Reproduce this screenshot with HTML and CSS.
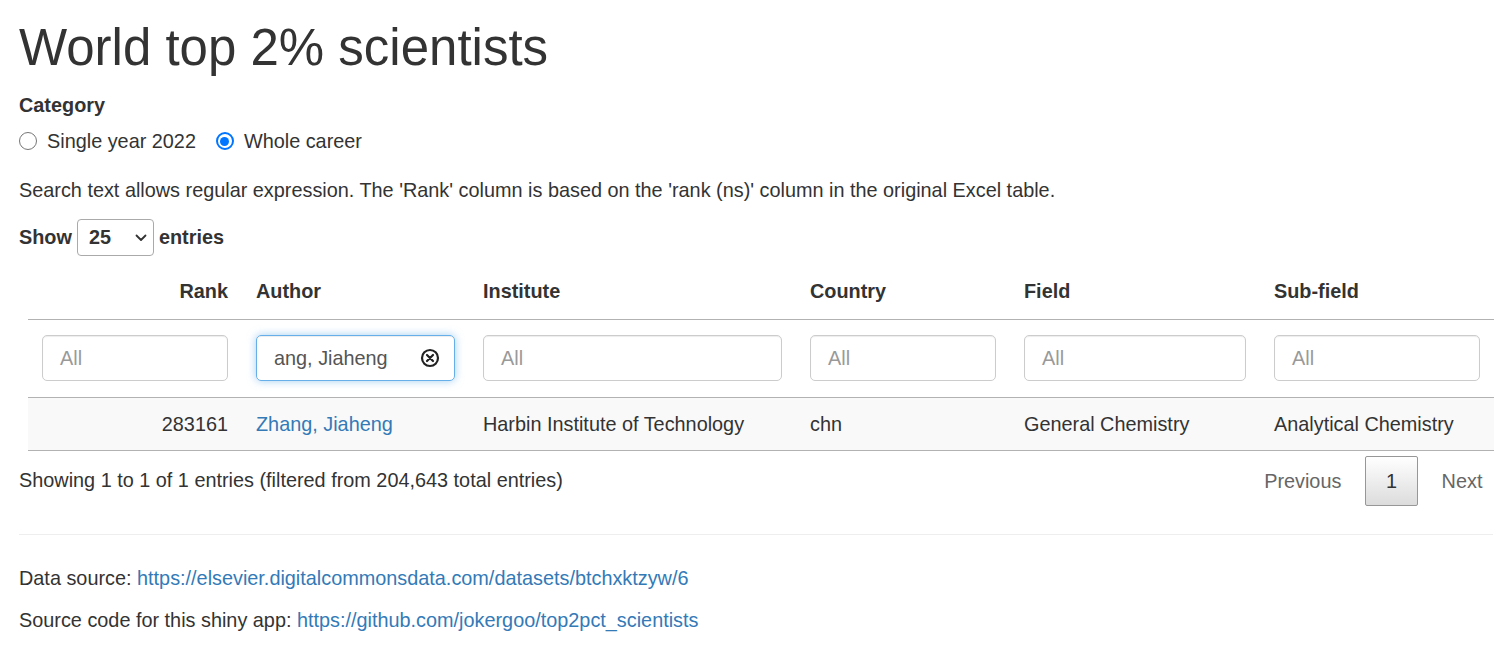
FILE: index.html
```html
<!DOCTYPE html>
<html>
<head>
<meta charset="utf-8">
<title>World top 2% scientists</title>
<link rel="stylesheet" href="styles.css">
</head>
<body>
<div class="page">
  <h1 class="title">World top 2% scientists</h1>
  <div class="form-group">
    <div class="label">Category</div>
    <div class="radios">
      <label class="radio"><span class="dot"></span>Single year 2022</label>
      <label class="radio"><span class="dot checked"></span>Whole career</label>
    </div>
  </div>
  <p class="note">Search text allows regular expression. The 'Rank' column is based on the 'rank (ns)' column in the original Excel table.</p>
  <div class="length">
    <span>Show</span>
    <span class="select-wrap">
      <select class="length-select"><option>25</option></select>
      <svg class="chev" width="12" height="8" viewBox="0 0 12 8"><path d="M1.5 1.5 L6 6 L10.5 1.5" fill="none" stroke="#333" stroke-width="1.8" stroke-linecap="round" stroke-linejoin="round"/></svg>
    </span>
    <span>entries</span>
  </div>
  <table class="dt">
    <colgroup>
      <col class="c1"><col class="c2"><col class="c3"><col class="c4"><col class="c5"><col class="c6">
    </colgroup>
    <thead>
      <tr class="head">
        <th class="num">Rank</th><th>Author</th><th>Institute</th><th>Country</th><th>Field</th><th>Sub-field</th>
      </tr>
      <tr class="filters">
        <td><div class="fbox">All</div></td>
        <td><div class="fbox focus"><span class="val">ang, Jiaheng</span>
          <svg class="clear" width="20" height="20" viewBox="0 0 20 20"><circle cx="10" cy="10" r="8" fill="none" stroke="#222" stroke-width="2.2"/><path d="M7 7 L13 13 M13 7 L7 13" stroke="#222" stroke-width="2.2" stroke-linecap="round"/></svg></div></td>
        <td><div class="fbox">All</div></td>
        <td><div class="fbox">All</div></td>
        <td><div class="fbox">All</div></td>
        <td><div class="fbox">All</div></td>
      </tr>
    </thead>
    <tbody>
      <tr class="odd">
        <td class="num">283161</td>
        <td><a href="#">Zhang, Jiaheng</a></td>
        <td>Harbin Institute of Technology</td>
        <td>chn</td>
        <td>General Chemistry</td>
        <td>Analytical Chemistry</td>
      </tr>
    </tbody>
  </table>
  <div class="footer-row">
    <div class="info">Showing 1 to 1 of 1 entries (filtered from 204,643 total entries)</div>
    <div class="paging">
      <span class="pbtn disabled">Previous</span>
      <span class="pbtn current">1</span>
      <span class="pbtn disabled">Next</span>
    </div>
  </div>
  <hr class="rule">
  <p class="src">Data source: <a href="#">https://elsevier.digitalcommonsdata.com/datasets/btchxktzyw/6</a></p>
  <p class="src">Source code for this shiny app: <a href="#">https://github.com/jokergoo/top2pct_scientists</a></p>
</div>
</body>
</html>
```
FILE: styles.css
```css
html, body {
  margin: 0;
  padding: 0;
  background: #fff;
}
body {
  font-family: "Liberation Sans", Arial, sans-serif;
  font-size: 19.85px;
  line-height: 28px;
  color: #333;
}
a {
  color: #337ab7;
  text-decoration: none;
}
.page {
  padding: 0 19px;
}
.title {
  font-size: 51px;
  font-weight: normal;
  line-height: 55px;
  margin: 20px 0 16px;
}
.form-group {
  margin-bottom: 21px;
}
.label {
  font-weight: bold;
  margin-bottom: 8px;
}
.radios {
  display: flex;
  gap: 20px;
}
.radio {
  display: flex;
  align-items: center;
  gap: 10px;
}
.dot {
  width: 16px;
  height: 16px;
  border: 1px solid #767676;
  border-radius: 50%;
  box-sizing: content-box;
  background: #fff;
  position: relative;
}
.dot.checked {
  border: 2px solid #0075ff;
  width: 14px;
  height: 14px;
}
.dot.checked::after {
  content: "";
  position: absolute;
  left: 2.5px;
  top: 2.5px;
  width: 9px;
  height: 9px;
  border-radius: 50%;
  background: #0075ff;
}
.note {
  margin: 0 0 14px;
}
.length {
  display: flex;
  align-items: center;
  gap: 5px;
  font-weight: bold;
  height: 38px;
}
.select-wrap {
  position: relative;
  display: inline-flex;
}
.length-select {
  -webkit-appearance: none;
  appearance: none;
  font-family: inherit;
  font-size: 19.85px;
  font-weight: bold;
  color: #333;
  width: 77px;
  height: 37px;
  padding: 0 6px 0 11px;
  border: 1px solid #aaa;
  border-radius: 4px;
  background: #fff;
}
.chev {
  position: absolute;
  right: 7px;
  top: 15px;
  pointer-events: none;
}
.dt {
  border-collapse: collapse;
  margin: 7px 0 0 9px;
  width: calc(100% - 9px);
  table-layout: fixed;
}
.c1 { width: 214px; }
.c2 { width: 227px; }
.c3 { width: 327px; }
.c4 { width: 214px; }
.c5 { width: 250px; }
.c6 { width: 234px; }
.dt th {
  text-align: left;
  font-weight: bold;
  padding: 14px 14px 14px;
  border-bottom: 1px solid #b2b2b2;
}
.dt .num {
  text-align: right;
}
.filters td {
  padding: 15px 14px 16px;
  border-bottom: 1px solid #b2b2b2;
}
.fbox {
  height: 44px;
  border: 1px solid #ccc;
  border-radius: 5px;
  padding: 0 17px;
  display: flex;
  align-items: center;
  color: #999;
  position: relative;
  box-shadow: inset 0 1px 1px rgba(0,0,0,0.075);
}
.fbox.focus {
  border-color: #66afe9;
  color: #555;
  box-shadow: inset 0 1px 1px rgba(0,0,0,0.075), 0 0 8px rgba(102,175,233,0.6);
}
.clear {
  position: absolute;
  right: 14px;
  top: 12px;
}
.odd td {
  background: #f9f9f9;
  padding: 12px 14px 12px;
  border-bottom: 1px solid #b2b2b2;
  white-space: nowrap;
}
.footer-row {
  display: flex;
  justify-content: space-between;
  align-items: flex-start;
  margin-right: -10px;
}
.info {
  padding-top: 15px;
}
.paging {
  display: flex;
  padding-top: 5px;
}
.pbtn {
  padding: 10px 19.6px;
  border: 1px solid transparent;
  border-radius: 2px;
  margin-left: 3px;
  line-height: 28px;
}
.pbtn.disabled {
  color: #666;
}
.pbtn.current {
  border: 1px solid #979797;
  background: linear-gradient(to bottom, #fff 0%, #dcdcdc 100%);
  color: #333;
  padding: 10px 20px;
}
.rule {
  border: 0;
  border-top: 1px solid #eee;
  margin: 28px 0 29px;
}
.src {
  margin: 0 0 14px;
}
```
